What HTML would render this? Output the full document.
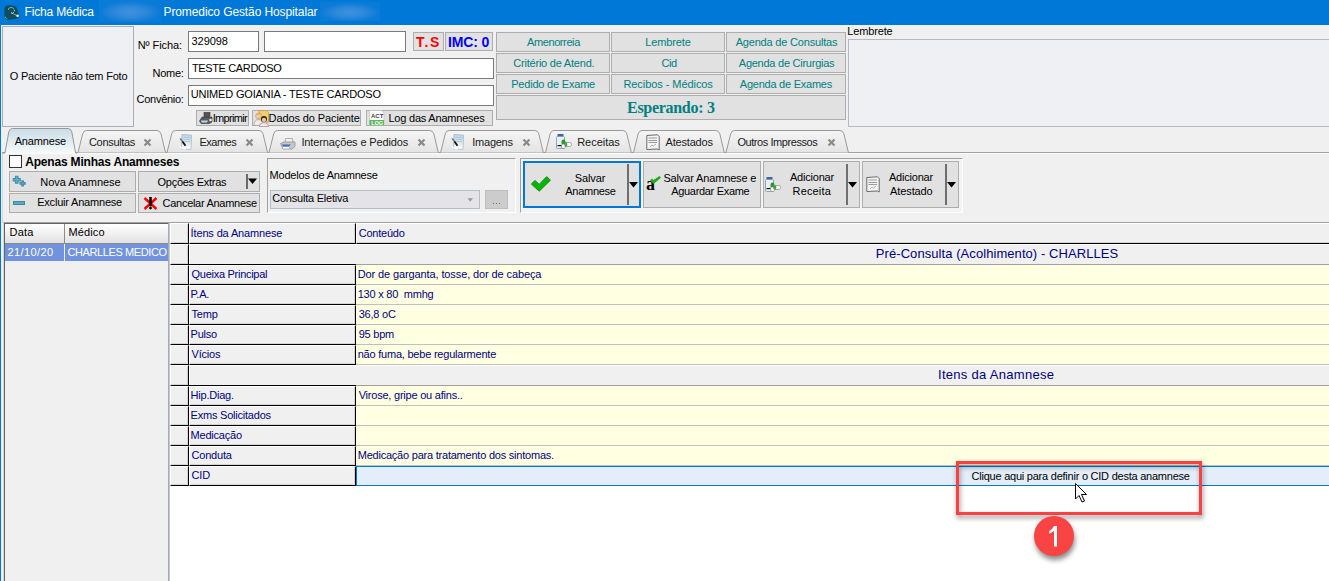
<!DOCTYPE html>
<html><head><meta charset="utf-8">
<style>
*{box-sizing:border-box;margin:0;padding:0}
html,body{width:1329px;height:581px;overflow:hidden;background:#f0f0f0;font-family:"Liberation Sans",sans-serif;font-size:11px;color:#000}
.a{position:absolute}
</style></head><body>
<div class="a" style="left:0px;top:0px;width:1329px;height:25px;background:#0078d7"></div>
<svg class="a" style="left:0;top:0" width="22" height="22"><path d="M5,7 Q6,5 9,5.2 L14,5.8 Q16.5,6.3 17.3,9 L19.2,15 Q19.6,18.6 16,19 L8,19.7 Q5,19.6 4.6,17 L4.4,10 Q4.4,8 5,7 Z" fill="#0d4f5e"/><path d="M8.5,9.5 Q9,7 12,7.6 Q14.8,8.5 14.3,11.5 Q13.5,13.3 11,12.8 L17,15.6" stroke="#e6f4f8" stroke-width="1" stroke-dasharray="1.1,0.9" fill="none"/><circle cx="17.6" cy="15.8" r="1.3" fill="#e6f4f8"/><path d="M5.2,17 L7,18.8" stroke="#cfe6ee" stroke-width="1" stroke-dasharray="1,0.8"/></svg>
<div class="a" style="left:24.6px;top:5px;font-size:12px;letter-spacing:-0.182px;color:#fff;;white-space:pre;line-height:normal">Ficha Médica</div>
<div class="a" style="left:99px;top:0px;width:62px;height:22px;background:radial-gradient(ellipse 50% 50% at 50% 55%,#3e92dd 0%,#3089da 45%,#0a7bd7 100%)"></div>
<div class="a" style="left:163.5px;top:5px;font-size:12px;letter-spacing:-0.104px;color:#fff;;white-space:pre;line-height:normal">Promedico Gestão Hospitalar</div>
<div class="a" style="left:320px;top:2px;width:60px;height:19px;background:radial-gradient(ellipse 50% 50% at 50% 55%,#3e92dd 0%,#3089da 45%,#0a7bd7 100%)"></div>
<div class="a" style="left:0px;top:25px;width:1px;height:556px;background:#0078d7"></div>
<div class="a" style="left:2px;top:26px;width:132px;height:101px;border:1px solid #a9aeb6;background:#eff0f3"></div>
<div class="a" style="left:9.7px;top:70px;font-size:11px;letter-spacing:-0.2px;color:#000;;white-space:pre;line-height:normal">O Paciente não tem Foto</div>
<div class="a" style="left:137.7px;top:39px;font-size:11px;letter-spacing:-0.062px;color:#000;;white-space:pre;line-height:normal">Nº Ficha:</div>
<div class="a" style="left:152.6px;top:67px;font-size:11px;letter-spacing:-0.3px;color:#000;;white-space:pre;line-height:normal">Nome:</div>
<div class="a" style="left:136.5px;top:93px;font-size:11px;letter-spacing:-0.263px;color:#000;;white-space:pre;line-height:normal">Convênio:</div>
<div class="a" style="left:188px;top:31px;width:71px;height:21px;background:#fff;border:1px solid #7a7a7a;"></div>
<div class="a" style="left:264px;top:31px;width:142px;height:21px;background:#fff;border:1px solid #7a7a7a;"></div>
<div class="a" style="left:188px;top:58px;width:306px;height:21px;background:#fff;border:1px solid #7a7a7a;"></div>
<div class="a" style="left:188px;top:85px;width:306px;height:21px;background:#fff;border:1px solid #7a7a7a;"></div>
<div class="a" style="left:191.6px;top:35px;font-size:11px;letter-spacing:-0.1px;color:#000;;white-space:pre;line-height:normal">329098</div>
<div class="a" style="left:191.9px;top:62px;font-size:11px;letter-spacing:-0.358px;color:#000;;white-space:pre;line-height:normal">TESTE CARDOSO</div>
<div class="a" style="left:190.7px;top:88px;font-size:11px;letter-spacing:-0.172px;color:#000;;white-space:pre;line-height:normal">UNIMED GOIANIA - TESTE CARDOSO</div>
<div class="a" style="left:413px;top:32px;width:31px;height:19px;background:#e1e1e1;border:1px solid #adadad;"></div>
<div class="a" style="left:445px;top:32px;width:48px;height:19px;background:#e1e1e1;border:1px solid #adadad;"></div>
<div class="a" style="left:416.0px;top:34px;font-size:14px;letter-spacing:1.6px;color:#f00;font-weight:bold;white-space:pre;line-height:normal">T.S</div>
<div class="a" style="left:447.9px;top:34px;font-size:14px;letter-spacing:-0.14px;color:#00f;font-weight:bold;white-space:pre;line-height:normal">IMC: 0</div>
<div class="a" style="left:196px;top:110px;width:53px;height:16px;background:#e1e1e1;border:1px solid #adadad;"></div>
<div class="a" style="left:252px;top:110px;width:109px;height:16px;background:#e1e1e1;border:1px solid #adadad;"></div>
<div class="a" style="left:366px;top:110px;width:127px;height:16px;background:#e1e1e1;border:1px solid #adadad;"></div>
<div class="a" style="left:212.7px;top:112px;font-size:11px;letter-spacing:-0.671px;color:#000;;white-space:pre;line-height:normal">Imprimir</div>
<div class="a" style="left:268.6px;top:112px;font-size:11px;letter-spacing:-0.106px;color:#000;;white-space:pre;line-height:normal">Dados do Paciente</div>
<div class="a" style="left:388.4px;top:112px;font-size:11px;letter-spacing:-0.206px;color:#000;;white-space:pre;line-height:normal">Log das Anamneses</div>
<svg class="a" style="left:199px;top:112px" width="14" height="12"><rect x="5" y="0.5" width="6" height="4" fill="#555" stroke="#333" stroke-width="0.6"/><path d="M0.5,9 L3,5 H13 L13,10 L10.5,11.5 H2 Z" fill="#5a5a5a" stroke="#333" stroke-width="0.6"/><path d="M2,8.5 H9 L8,10.5 H2.5 Z" fill="#aee0ee"/><circle cx="11.5" cy="8" r="1.3" fill="#eef"/></svg>
<svg class="a" style="left:253px;top:109px" width="17" height="18"><path d="M6,1.5 H13.5 L15.5,3.5 V13 H6 Z" fill="#f3cf6a" stroke="#c49a3a" stroke-width="0.8"/><circle cx="5.5" cy="7" r="2.9" fill="#f2c9a0" stroke="#b08a60" stroke-width="0.5"/><path d="M2.7,6 Q3.5,3.6 5.8,3.8 Q8,4 8.3,6 Q6,5 2.7,6 Z" fill="#d8b060"/><path d="M0.8,16.5 Q1.2,10.6 5.5,10.6 Q9.6,10.6 10,16.5 Z" fill="#ececec" stroke="#9a9a9a" stroke-width="0.7"/><circle cx="11" cy="10" r="3" fill="#33261e"/><circle cx="11" cy="10.9" r="2.1" fill="#f0c8a8"/><path d="M6.3,17.5 Q6.7,13.6 11,13.6 Q15.2,13.6 15.7,17.5 Z" fill="#f6e8e8" stroke="#a08888" stroke-width="0.7"/></svg>
<svg class="a" style="left:369px;top:110px" width="16" height="16"><path d="M0.5,0.5 H12.5 L15,3 V15.5 H0.5 Z" fill="#fff" stroke="#bbb" stroke-width="0.7"/><text x="2" y="8" font-family="Liberation Sans" font-weight="bold" font-size="6" fill="#444">ACT</text><rect x="0.5" y="10" width="14.5" height="5.5" fill="#5cb85c"/><text x="2.2" y="15" font-family="Liberation Sans" font-weight="bold" font-size="5.5" fill="#fff">LOG</text></svg>
<div class="a" style="left:496px;top:32px;width:114px;height:20px;background:#e1e1e1;border:1px solid #adadad;"></div>
<div class="a" style="left:496px;top:53px;width:114px;height:20px;background:#e1e1e1;border:1px solid #adadad;"></div>
<div class="a" style="left:496px;top:74px;width:114px;height:20px;background:#e1e1e1;border:1px solid #adadad;"></div>
<div class="a" style="left:611px;top:32px;width:114px;height:20px;background:#e1e1e1;border:1px solid #adadad;"></div>
<div class="a" style="left:611px;top:53px;width:114px;height:20px;background:#e1e1e1;border:1px solid #adadad;"></div>
<div class="a" style="left:611px;top:74px;width:114px;height:20px;background:#e1e1e1;border:1px solid #adadad;"></div>
<div class="a" style="left:726px;top:32px;width:120px;height:20px;background:#e1e1e1;border:1px solid #adadad;"></div>
<div class="a" style="left:726px;top:53px;width:120px;height:20px;background:#e1e1e1;border:1px solid #adadad;"></div>
<div class="a" style="left:726px;top:74px;width:120px;height:20px;background:#e1e1e1;border:1px solid #adadad;"></div>
<div class="a" style="left:496px;top:95px;width:350px;height:25px;background:#e1e1e1;border:1px solid #adadad;"></div>
<div class="a" style="left:527.0px;top:36px;font-size:11px;letter-spacing:-0.4px;color:#008080;;white-space:pre;line-height:normal">Amenorreia</div>
<div class="a" style="left:513.3px;top:57px;font-size:11px;letter-spacing:-0.218px;color:#008080;;white-space:pre;line-height:normal">Critério de Atend.</div>
<div class="a" style="left:511.2px;top:78px;font-size:11px;letter-spacing:-0.2px;color:#008080;;white-space:pre;line-height:normal">Pedido de Exame</div>
<div class="a" style="left:645.3px;top:36px;font-size:11px;letter-spacing:-0.129px;color:#008080;;white-space:pre;line-height:normal">Lembrete</div>
<div class="a" style="left:661.4px;top:57px;font-size:11px;letter-spacing:-0.4px;color:#008080;;white-space:pre;line-height:normal">Cid</div>
<div class="a" style="left:623.4px;top:78px;font-size:11px;letter-spacing:-0.062px;color:#008080;;white-space:pre;line-height:normal">Recibos - Médicos</div>
<div class="a" style="left:735.7px;top:36px;font-size:11px;letter-spacing:-0.189px;color:#008080;;white-space:pre;line-height:normal">Agenda de Consultas</div>
<div class="a" style="left:738.8px;top:57px;font-size:11px;letter-spacing:-0.25px;color:#008080;;white-space:pre;line-height:normal">Agenda de Cirurgias</div>
<div class="a" style="left:739.8px;top:78px;font-size:11px;letter-spacing:-0.24px;color:#008080;;white-space:pre;line-height:normal">Agenda de Exames</div>
<div class="a" style="left:627.0px;top:99px;font-size:16px;letter-spacing:-0.291px;color:#008080;font-family:'Liberation Serif';font-weight:bold;white-space:pre;line-height:normal">Esperando: 3</div>
<div class="a" style="left:847.2px;top:25px;font-size:11px;letter-spacing:-0.143px;color:#000;;white-space:pre;line-height:normal">Lembrete</div>
<div class="a" style="left:848px;top:39px;width:490px;height:88px;border:1px solid #b4b9c2;background:#eff0f3"></div>
<div class="a" style="left:2px;top:152px;width:1327px;height:1px;background:#a0a0a0"></div>
<div class="a" style="left:3px;top:153px;width:1326px;height:1px;background:#fdfdfd"></div>
<div class="a" style="left:2px;top:153px;width:1px;height:70px;background:#d8d8d8"></div>
<svg class="a" style="left:0;top:126px" width="1329" height="28"><defs><linearGradient id="tg" x1="0" y1="0" x2="0" y2="1"><stop offset="0" stop-color="#f5f5f5"/><stop offset="1" stop-color="#e4e4e4"/></linearGradient><linearGradient id="ta" x1="0" y1="0" x2="0" y2="1"><stop offset="0" stop-color="#c9dde6"/><stop offset="1" stop-color="#f6f9fa"/></linearGradient></defs><path d="M78.0,26.5 L82.7,7.8 Q83.6,4.5 86.5,4.5 L157.0,4.5 Q159.9,4.5 161.0,7.8 L165.5,26.5" fill="url(#tg)" stroke="#999" stroke-width="1"/><path d="M167.0,26.5 L171.7,7.8 Q172.6,4.5 175.5,4.5 L259.0,4.5 Q261.9,4.5 263.0,7.8 L267.5,26.5" fill="url(#tg)" stroke="#999" stroke-width="1"/><path d="M269.0,26.5 L273.7,7.8 Q274.6,4.5 277.5,4.5 L429.8,4.5 Q432.7,4.5 433.8,7.8 L438.3,26.5" fill="url(#tg)" stroke="#999" stroke-width="1"/><path d="M440.6,26.5 L445.3,7.8 Q446.2,4.5 449.1,4.5 L534.8,4.5 Q537.7,4.5 538.8,7.8 L543.3,26.5" fill="url(#tg)" stroke="#999" stroke-width="1"/><path d="M545.5,26.5 L550.2,7.8 Q551.1,4.5 554.0,4.5 L622.8,4.5 Q625.7,4.5 626.8,7.8 L631.3,26.5" fill="url(#tg)" stroke="#999" stroke-width="1"/><path d="M633.5,26.5 L638.2,7.8 Q639.1,4.5 642.0,4.5 L715.8,4.5 Q718.7,4.5 719.8,7.8 L724.3,26.5" fill="url(#tg)" stroke="#999" stroke-width="1"/><path d="M726.0,26.5 L730.7,7.8 Q731.6,4.5 734.5,4.5 L839.9,4.5 Q842.8,4.5 843.9,7.8 L848.4,26.5" fill="url(#tg)" stroke="#999" stroke-width="1"/><path d="M2,27.0 L5,27.0 L8.8,5.8 Q9.8,2.5 12.5,2.5 L68.1,2.5 Q70.8,2.5 71.8,5.8 L75.6,27.0 L77.1,27.0 Z" fill="url(#ta)" stroke="none"/><path d="M2,27.0 L5,27.0 L8.8,5.8 Q9.8,2.5 12.5,2.5 L68.1,2.5 Q70.8,2.5 71.8,5.8 L75.6,27.0 L77.1,27.0" fill="none" stroke="#999" stroke-width="1"/></svg>
<div class="a" style="left:14.7px;top:135px;font-size:11px;letter-spacing:-0.171px;color:#000;;white-space:pre;line-height:normal">Anamnese</div>
<div class="a" style="left:89.0px;top:136px;font-size:11px;letter-spacing:-0.325px;color:#1a1a1a;;white-space:pre;line-height:normal">Consultas</div>
<div class="a" style="left:199.5px;top:136px;font-size:11px;letter-spacing:-0.5px;color:#1a1a1a;;white-space:pre;line-height:normal">Exames</div>
<div class="a" style="left:301.4px;top:136px;font-size:11px;letter-spacing:-0.125px;color:#1a1a1a;;white-space:pre;line-height:normal">Internações e Pedidos</div>
<div class="a" style="left:472.3px;top:136px;font-size:11px;letter-spacing:-0.25px;color:#1a1a1a;;white-space:pre;line-height:normal">Imagens</div>
<div class="a" style="left:577.2px;top:136px;font-size:11px;letter-spacing:-0.029px;color:#1a1a1a;;white-space:pre;line-height:normal">Receitas</div>
<div class="a" style="left:665.6px;top:136px;font-size:11px;letter-spacing:-0.2px;color:#1a1a1a;;white-space:pre;line-height:normal">Atestados</div>
<div class="a" style="left:737.4px;top:136px;font-size:11px;letter-spacing:-0.427px;color:#1a1a1a;;white-space:pre;line-height:normal">Outros Impressos</div>
<svg class="a" style="left:143px;top:138px" width="9" height="9"><path d="M1.5,1.5 L7.5,7.5 M7.5,1.5 L1.5,7.5" stroke="#8a8a8a" stroke-width="2.2"/></svg>
<svg class="a" style="left:245px;top:138px" width="9" height="9"><path d="M1.5,1.5 L7.5,7.5 M7.5,1.5 L1.5,7.5" stroke="#8a8a8a" stroke-width="2.2"/></svg>
<svg class="a" style="left:417px;top:138px" width="9" height="9"><path d="M1.5,1.5 L7.5,7.5 M7.5,1.5 L1.5,7.5" stroke="#8a8a8a" stroke-width="2.2"/></svg>
<svg class="a" style="left:522px;top:138px" width="9" height="9"><path d="M1.5,1.5 L7.5,7.5 M7.5,1.5 L1.5,7.5" stroke="#8a8a8a" stroke-width="2.2"/></svg>
<svg class="a" style="left:827px;top:138px" width="9" height="9"><path d="M1.5,1.5 L7.5,7.5 M7.5,1.5 L1.5,7.5" stroke="#8a8a8a" stroke-width="2.2"/></svg>
<svg class="a" style="left:179px;top:134px" width="14" height="16"><defs><linearGradient id="dpg" x1="0" y1="0" x2="0" y2="1"><stop offset="0" stop-color="#b4d8f4"/><stop offset="0.55" stop-color="#dde8ee"/><stop offset="1" stop-color="#ffffff"/></linearGradient></defs><path d="M3,0.5 L12.5,1.2 L12,15.5 L2.5,14.5 Z" fill="url(#dpg)" stroke="#a0a8ae" stroke-width="0.6"/><path d="M4.5,3.5 H11 M4.5,5.5 H11 M4.5,7.5 H11" stroke="#9fb4c2" stroke-width="0.6"/><path d="M1.2,4.5 L3.5,7.5" stroke="#777" stroke-width="1.6"/><path d="M3.5,7.5 L6.5,11.8" stroke="#111" stroke-width="1.8"/><path d="M0.8,12.5 L3,14 L7,15" stroke="#fff" stroke-width="1.2" fill="none"/></svg>
<svg class="a" style="left:451px;top:134px" width="14" height="16"><defs><linearGradient id="dpg" x1="0" y1="0" x2="0" y2="1"><stop offset="0" stop-color="#b4d8f4"/><stop offset="0.55" stop-color="#dde8ee"/><stop offset="1" stop-color="#ffffff"/></linearGradient></defs><path d="M3,0.5 L12.5,1.2 L12,15.5 L2.5,14.5 Z" fill="url(#dpg)" stroke="#a0a8ae" stroke-width="0.6"/><path d="M4.5,3.5 H11 M4.5,5.5 H11 M4.5,7.5 H11" stroke="#9fb4c2" stroke-width="0.6"/><path d="M1.2,4.5 L3.5,7.5" stroke="#777" stroke-width="1.6"/><path d="M3.5,7.5 L6.5,11.8" stroke="#111" stroke-width="1.8"/><path d="M0.8,12.5 L3,14 L7,15" stroke="#fff" stroke-width="1.2" fill="none"/></svg>
<svg class="a" style="left:556px;top:133px" width="17" height="17"><rect x="1.5" y="1" width="6" height="2.5" fill="#3c64b4"/><rect x="0.5" y="3.5" width="8" height="12" rx="1" fill="#e8f0fa" stroke="#8090a0" stroke-width="0.8"/><rect x="1.5" y="12" width="5" height="1.2" fill="#111"/><rect x="5.5" y="6.5" width="4" height="5.5" rx="2" fill="#2a9a2a"/><rect x="5.5" y="11" width="4" height="4.5" rx="1.5" fill="#fff" stroke="#777" stroke-width="0.6"/><rect x="9" y="9.5" width="6.5" height="4" rx="1.8" fill="#fff" stroke="#777" stroke-width="0.6"/><rect x="8.6" y="9.5" width="2.6" height="4" fill="#3aaa3a"/></svg>
<svg class="a" style="left:646px;top:134px" width="14" height="17"><path d="M0.8,1.5 L11.5,0.8 L13.2,2.5 L13.2,16 L11.5,15 L0.8,15.5 Z" fill="#f4f4f4" stroke="#6a6a6a" stroke-width="1"/><path d="M2.5,4 H11 M2.5,6.5 H11 M2.5,8.5 H11" stroke="#9a9a9a" stroke-width="1"/><path d="M4,13 L6,11 L7.5,12 L10,10" stroke="#999" stroke-width="0.8" fill="none"/></svg>
<svg class="a" style="left:280px;top:138px" width="16" height="12"><path d="M5.5,0.5 H12.5 L13,6 H5 Z" fill="#f0f0f0" stroke="#999" stroke-width="0.7"/><path d="M0.5,5.5 L4,4 H15 L15,8.5 L12,11 H3 Z" fill="#c8c8c8" stroke="#888" stroke-width="0.7"/><path d="M2,6.5 H11 L9,8.5 H3 Z" fill="#3c6cc0"/><rect x="3" y="9" width="6" height="1.5" fill="#fff"/></svg>
<div class="a" style="left:9px;top:155px;width:13px;height:13px;border:1px solid #333;background:#fff"></div>
<div class="a" style="left:25.2px;top:155px;font-size:12px;letter-spacing:-0.186px;color:#000;font-weight:bold;white-space:pre;line-height:normal">Apenas Minhas Anamneses</div>
<div class="a" style="left:9px;top:171px;width:127px;height:21px;background:#e1e1e1;border:1px solid #adadad;"></div>
<div class="a" style="left:9px;top:193px;width:127px;height:20px;background:#e1e1e1;border:1px solid #adadad;"></div>
<div class="a" style="left:138px;top:171px;width:122px;height:21px;background:#e1e1e1;border:1px solid #adadad;"></div>
<div class="a" style="left:138px;top:193px;width:122px;height:20px;background:#e1e1e1;border:1px solid #adadad;"></div>
<div class="a" style="left:40.3px;top:176px;font-size:11px;letter-spacing:-0.025px;color:#000;;white-space:pre;line-height:normal">Nova Anamnese</div>
<div class="a" style="left:37.2px;top:196px;font-size:11px;letter-spacing:-0.2px;color:#000;;white-space:pre;line-height:normal">Excluir Anamnese</div>
<div class="a" style="left:157.5px;top:176px;font-size:11px;letter-spacing:-0.258px;color:#000;;white-space:pre;line-height:normal">Opções Extras</div>
<div class="a" style="left:162.6px;top:197px;font-size:11px;letter-spacing:-0.287px;color:#000;;white-space:pre;line-height:normal">Cancelar Anamnese</div>
<svg class="a" style="left:12px;top:175px" width="15" height="12"><path d="M3.5,1.2 h2.5 v2.3 h2.3 v2.5 h-2.3 v2.3 h-2.5 v-2.3 h-2.3 v-2.5 h2.3 z" fill="#62aec4" stroke="#3f8ea6" stroke-width="1.1" stroke-linejoin="round"/><path d="M9.8,5.8 h1.6 v1.8 h1.8 v1.6 h-1.8 v1.8 h-1.6 v-1.8 h-1.8 v-1.6 h1.8 z" fill="#62aec4" stroke="#3f8ea6" stroke-width="1.1" stroke-linejoin="round"/></svg>
<div class="a" style="left:13px;top:201px;width:12px;height:4px;background:#5aaac2;border:1px solid #3f8aa3"></div>
<svg class="a" style="left:143px;top:197px" width="15" height="13"><path d="M1.5,1 L13.5,12 M13.5,1 L1.5,12" stroke="#f00" stroke-width="2.4"/><path d="M7.5,0.5 L7.5,8" stroke="#000" stroke-width="2.6" stroke-linecap="round"/><circle cx="7.5" cy="11" r="1.4" fill="#000"/></svg>
<div class="a" style="left:246px;top:174px;width:2px;height:15px;background:#6a6a6a"></div>
<svg class="a" style="left:248px;top:178px" width="10" height="7"><path d="M0,0.5 H9 L4.5,6 Z" fill="#000"/></svg>
<div class="a" style="left:267px;top:158px;width:249px;height:55px;border:1px solid #a0a0a0;border-right-color:#fff;border-bottom-color:#fff"></div>
<div class="a" style="left:269.5px;top:169px;font-size:11px;letter-spacing:-0.194px;color:#000;;white-space:pre;line-height:normal">Modelos de Anamnese</div>
<div class="a" style="left:270px;top:190px;width:210px;height:19px;background:#e4e4e8;border:1px solid #b4bcc4"></div>
<div class="a" style="left:272.2px;top:192px;font-size:11px;letter-spacing:-0.213px;color:#000;;white-space:pre;line-height:normal">Consulta Eletiva</div>
<svg class="a" style="left:467px;top:198px" width="7" height="5"><path d="M0.5,0.2 H6 L3.25,3.8 Z" fill="#9a9a9a"/></svg>
<div class="a" style="left:485px;top:190px;width:23px;height:19px;background:#cccccc;border:1px solid #bdbdbd"></div>
<div class="a" style="left:493px;top:203px;width:1px;height:1px;background:#707070"></div>
<div class="a" style="left:496px;top:203px;width:1px;height:1px;background:#707070"></div>
<div class="a" style="left:499px;top:203px;width:1px;height:1px;background:#707070"></div>
<div class="a" style="left:520px;top:158px;width:443px;height:55px;border:1px solid #a0a0a0;border-right-color:#fff;border-bottom-color:#fff;background:#f3f3f3"></div>
<div class="a" style="left:523px;top:161px;width:118px;height:47px;background:#e1e1e1;border:2px solid #0078d7"></div>
<div class="a" style="left:643px;top:161px;width:118px;height:47px;background:#e1e1e1;border:1px solid #adadad;"></div>
<div class="a" style="left:763px;top:161px;width:97px;height:47px;background:#e1e1e1;border:1px solid #adadad;"></div>
<div class="a" style="left:862px;top:161px;width:97px;height:47px;background:#e1e1e1;border:1px solid #adadad;"></div>
<div class="a" style="left:574.7px;top:172px;font-size:11px;letter-spacing:-0.1px;color:#000;;white-space:pre;line-height:normal">Salvar</div>
<div class="a" style="left:565.2px;top:185px;font-size:11px;letter-spacing:-0.257px;color:#000;;white-space:pre;line-height:normal">Anamnese</div>
<div class="a" style="left:663.4px;top:172px;font-size:11px;letter-spacing:-0.144px;color:#000;;white-space:pre;line-height:normal">Salvar Anamnese e</div>
<div class="a" style="left:671.2px;top:185px;font-size:11px;letter-spacing:-0.308px;color:#000;;white-space:pre;line-height:normal">Aguardar Exame</div>
<div class="a" style="left:790.0px;top:171px;font-size:11px;letter-spacing:-0.213px;color:#000;;white-space:pre;line-height:normal">Adicionar</div>
<div class="a" style="left:792.6px;top:185px;font-size:11px;letter-spacing:0.15px;color:#000;;white-space:pre;line-height:normal">Receita</div>
<div class="a" style="left:889.0px;top:171px;font-size:11px;letter-spacing:-0.213px;color:#000;;white-space:pre;line-height:normal">Adicionar</div>
<div class="a" style="left:890.1px;top:185px;font-size:11px;letter-spacing:-0.114px;color:#000;;white-space:pre;line-height:normal">Atestado</div>
<div class="a" style="left:627px;top:164px;width:2px;height:41px;background:#6f6f6f"></div>
<svg class="a" style="left:629px;top:182px" width="10" height="6"><path d="M0,0 H9 L4.5,5.5 Z" fill="#000"/></svg>
<div class="a" style="left:846px;top:164px;width:2px;height:41px;background:#6f6f6f"></div>
<svg class="a" style="left:848px;top:182px" width="10" height="6"><path d="M0,0 H9 L4.5,5.5 Z" fill="#000"/></svg>
<div class="a" style="left:945px;top:164px;width:2px;height:41px;background:#6f6f6f"></div>
<svg class="a" style="left:947px;top:182px" width="10" height="6"><path d="M0,0 H9 L4.5,5.5 Z" fill="#000"/></svg>
<svg class="a" style="left:529px;top:174px" width="24" height="20"><path d="M2.3,10 L6,6.5 L10.2,10.4 L17.7,2.6 L21.4,6.2 L10.2,17.2 Z" fill="#00b800" stroke="#138a13" stroke-width="1" stroke-linejoin="round"/></svg>
<div class="a" style="left:646px;top:176px;font-family:'Liberation Serif',serif;font-size:18px;font-weight:bold;line-height:16px">a</div>
<svg class="a" style="left:649px;top:176px" width="13" height="9"><path d="M1,4.5 L3,2.5 L4.5,4 L10.5,0 L12,1.8 L4.5,8 Z" fill="#1faa1f"/></svg>
<svg class="a" style="left:765px;top:176px" width="17" height="17"><rect x="1.5" y="1" width="6" height="2.5" fill="#3c64b4"/><rect x="0.5" y="3.5" width="8" height="12" rx="1" fill="#e8f0fa" stroke="#8090a0" stroke-width="0.8"/><rect x="1.5" y="12" width="5" height="1.2" fill="#111"/><rect x="5.5" y="6.5" width="4" height="5.5" rx="2" fill="#2a9a2a"/><rect x="5.5" y="11" width="4" height="4.5" rx="1.5" fill="#fff" stroke="#777" stroke-width="0.6"/><rect x="9" y="9.5" width="6.5" height="4" rx="1.8" fill="#fff" stroke="#777" stroke-width="0.6"/><rect x="8.6" y="9.5" width="2.6" height="4" fill="#3aaa3a"/></svg>
<svg class="a" style="left:866px;top:176px" width="14" height="17"><path d="M0.8,1.5 L11.5,0.8 L13.2,2.5 L13.2,16 L11.5,15 L0.8,15.5 Z" fill="#f4f4f4" stroke="#6a6a6a" stroke-width="1"/><path d="M2.5,4 H11 M2.5,6.5 H11 M2.5,8.5 H11" stroke="#9a9a9a" stroke-width="1"/><path d="M4,13 L6,11 L7.5,12 L10,10" stroke="#999" stroke-width="0.8" fill="none"/></svg>
<div class="a" style="left:3px;top:222px;width:1326px;height:359px;border-top:1px solid #a0a0a0;border-left:1px solid #d8d8d8"></div>
<div class="a" style="left:4px;top:223px;width:165px;height:358px;border-top:1px solid #646464;border-left:1px solid #646464;background:#f0f0f0"></div>
<div class="a" style="left:5px;top:224px;width:164px;height:20px;background:linear-gradient(#ffffff,#e2e2e2);border-bottom:1px solid #8a8a8a"></div>
<div class="a" style="left:64px;top:224px;width:1px;height:19px;background:#8a8a8a"></div>
<div class="a" style="left:9.5px;top:226px;font-size:11px;letter-spacing:0.2px;color:#000;;white-space:pre;line-height:normal">Data</div>
<div class="a" style="left:68.5px;top:226px;font-size:11px;letter-spacing:0.12px;color:#000;;white-space:pre;line-height:normal">Médico</div>
<div class="a" style="left:5px;top:244px;width:163px;height:17px;background:#7193de"></div>
<div class="a" style="left:64px;top:244px;width:1px;height:17px;background:#f0f0f0"></div>
<div class="a" style="left:7.5px;top:246px;font-size:11px;letter-spacing:0.414px;color:#fff;;white-space:pre;line-height:normal">21/10/20</div>
<div class="a" style="left:65px;top:244px;width:103px;height:17px;overflow:hidden"><div class="a" style="left:2.4px;top:2px;font-size:11px;letter-spacing:-0.386px;color:#fff;;white-space:pre;line-height:normal">CHARLLES MEDICO</div></div>
<div class="a" style="left:168px;top:223px;width:1px;height:358px;background:#a6aab2"></div>
<div class="a" style="left:169px;top:223px;width:1px;height:358px;background:#c4c8ce"></div>
<div class="a" style="left:170px;top:223px;width:1159px;height:358px;background:#fff"></div>
<div class="a" style="left:170px;top:223px;width:19px;height:21px;background:#f0f0f0;border-top:1px solid #fff;border-left:1px solid #fff;border-bottom:1px solid #000;border-right:1px solid #000;box-shadow:inset -1px 0 0 #d4d4d4,inset 0 -1px 0 #d4d4d4;"></div>
<div class="a" style="left:189px;top:223px;width:167px;height:21px;background:#f0f0f0;border-top:1px solid #fff;border-left:1px solid #fff;border-bottom:1px solid #000;border-right:1px solid #000;box-shadow:inset -1px 0 0 #d4d4d4,inset 0 -1px 0 #d4d4d4;"></div>
<div class="a" style="left:356px;top:223px;width:973px;height:21px;background:#f0f0f0;border-top:1px solid #fff;border-left:1px solid #fff;border-bottom:1px solid #000;box-shadow:inset 0 -1px 0 #d4d4d4;"></div>
<div class="a" style="left:190.6px;top:227px;font-size:11px;letter-spacing:-0.144px;color:#000080;;white-space:pre;line-height:normal">Ítens da Anamnese</div>
<div class="a" style="left:358.7px;top:227px;font-size:11px;letter-spacing:-0.214px;color:#000080;;white-space:pre;line-height:normal">Conteúdo</div>
<div class="a" style="left:170px;top:244px;width:19px;height:21px;background:#f0f0f0;border-top:1px solid #fff;border-left:1px solid #fff;border-bottom:1px solid #000;border-right:1px solid #000;box-shadow:inset -1px 0 0 #d4d4d4,inset 0 -1px 0 #d4d4d4;"></div>
<div class="a" style="left:189px;top:244px;width:1140px;height:21px;background:#f0f0f0;border-top:1px solid #fff;border-left:1px solid #fff;border-bottom:1px solid #a0a0a0"></div>
<div class="a" style="left:189px;top:264px;width:167px;height:1px;background:#000"></div>
<div class="a" style="left:875.8px;top:246px;font-size:13px;letter-spacing:0.069px;color:#000080;;white-space:pre;line-height:normal">Pré-Consulta (Acolhimento) - CHARLLES</div>
<div class="a" style="left:170px;top:265px;width:19px;height:20px;background:#f0f0f0;border-top:1px solid #fff;border-left:1px solid #fff;border-bottom:1px solid #000;border-right:1px solid #000;box-shadow:inset -1px 0 0 #d4d4d4,inset 0 -1px 0 #d4d4d4;"></div>
<div class="a" style="left:189px;top:265px;width:167px;height:20px;background:#f0f0f0;border-top:1px solid #fff;border-left:1px solid #fff;border-bottom:1px solid #000;border-right:1px solid #000;box-shadow:inset -1px 0 0 #d4d4d4,inset 0 -1px 0 #d4d4d4;"></div>
<div class="a" style="left:356px;top:265px;width:973px;height:20px;background:#ffffe1;border-bottom:1px solid #c0c0c0"></div>
<div class="a" style="left:357.7px;top:268px;font-size:11px;letter-spacing:-0.111px;color:#000080;;white-space:pre;line-height:normal">Dor de garganta, tosse, dor de cabeça</div>
<div class="a" style="left:191.6px;top:268px;font-size:11px;letter-spacing:-0.28px;color:#000080;;white-space:pre;line-height:normal">Queixa Principal</div>
<div class="a" style="left:170px;top:285px;width:19px;height:20px;background:#f0f0f0;border-top:1px solid #fff;border-left:1px solid #fff;border-bottom:1px solid #000;border-right:1px solid #000;box-shadow:inset -1px 0 0 #d4d4d4,inset 0 -1px 0 #d4d4d4;"></div>
<div class="a" style="left:189px;top:285px;width:167px;height:20px;background:#f0f0f0;border-top:1px solid #fff;border-left:1px solid #fff;border-bottom:1px solid #000;border-right:1px solid #000;box-shadow:inset -1px 0 0 #d4d4d4,inset 0 -1px 0 #d4d4d4;"></div>
<div class="a" style="left:356px;top:285px;width:973px;height:20px;background:#ffffe1;border-bottom:1px solid #c0c0c0"></div>
<div class="a" style="left:357.7px;top:288px;font-size:11px;letter-spacing:-0.22px;color:#000080;;white-space:pre;line-height:normal">130 x 80  mmhg</div>
<div class="a" style="left:190.6px;top:288px;font-size:11px;letter-spacing:-0.22px;color:#000080;;white-space:pre;line-height:normal">P.A.</div>
<div class="a" style="left:170px;top:305px;width:19px;height:20px;background:#f0f0f0;border-top:1px solid #fff;border-left:1px solid #fff;border-bottom:1px solid #000;border-right:1px solid #000;box-shadow:inset -1px 0 0 #d4d4d4,inset 0 -1px 0 #d4d4d4;"></div>
<div class="a" style="left:189px;top:305px;width:167px;height:20px;background:#f0f0f0;border-top:1px solid #fff;border-left:1px solid #fff;border-bottom:1px solid #000;border-right:1px solid #000;box-shadow:inset -1px 0 0 #d4d4d4,inset 0 -1px 0 #d4d4d4;"></div>
<div class="a" style="left:356px;top:305px;width:973px;height:20px;background:#ffffe1;border-bottom:1px solid #c0c0c0"></div>
<div class="a" style="left:358.7px;top:308px;font-size:11px;letter-spacing:-0.22px;color:#000080;;white-space:pre;line-height:normal">36,8 oC</div>
<div class="a" style="left:191.6px;top:308px;font-size:11px;letter-spacing:-0.22px;color:#000080;;white-space:pre;line-height:normal">Temp</div>
<div class="a" style="left:170px;top:325px;width:19px;height:20px;background:#f0f0f0;border-top:1px solid #fff;border-left:1px solid #fff;border-bottom:1px solid #000;border-right:1px solid #000;box-shadow:inset -1px 0 0 #d4d4d4,inset 0 -1px 0 #d4d4d4;"></div>
<div class="a" style="left:189px;top:325px;width:167px;height:20px;background:#f0f0f0;border-top:1px solid #fff;border-left:1px solid #fff;border-bottom:1px solid #000;border-right:1px solid #000;box-shadow:inset -1px 0 0 #d4d4d4,inset 0 -1px 0 #d4d4d4;"></div>
<div class="a" style="left:356px;top:325px;width:973px;height:20px;background:#ffffe1;border-bottom:1px solid #c0c0c0"></div>
<div class="a" style="left:358.7px;top:328px;font-size:11px;letter-spacing:-0.22px;color:#000080;;white-space:pre;line-height:normal">95 bpm</div>
<div class="a" style="left:190.6px;top:328px;font-size:11px;letter-spacing:-0.22px;color:#000080;;white-space:pre;line-height:normal">Pulso</div>
<div class="a" style="left:170px;top:345px;width:19px;height:20px;background:#f0f0f0;border-top:1px solid #fff;border-left:1px solid #fff;border-bottom:1px solid #000;border-right:1px solid #000;box-shadow:inset -1px 0 0 #d4d4d4,inset 0 -1px 0 #d4d4d4;"></div>
<div class="a" style="left:189px;top:345px;width:167px;height:20px;background:#f0f0f0;border-top:1px solid #fff;border-left:1px solid #fff;border-bottom:1px solid #000;border-right:1px solid #000;box-shadow:inset -1px 0 0 #d4d4d4,inset 0 -1px 0 #d4d4d4;"></div>
<div class="a" style="left:356px;top:345px;width:973px;height:20px;background:#ffffe1;border-bottom:1px solid #c0c0c0"></div>
<div class="a" style="left:357.7px;top:348px;font-size:11px;letter-spacing:-0.22px;color:#000080;;white-space:pre;line-height:normal">não fuma, bebe regularmente</div>
<div class="a" style="left:191.6px;top:348px;font-size:11px;letter-spacing:-0.22px;color:#000080;;white-space:pre;line-height:normal">Vícios</div>
<div class="a" style="left:170px;top:365px;width:19px;height:21px;background:#f0f0f0;border-top:1px solid #fff;border-left:1px solid #fff;border-bottom:1px solid #000;border-right:1px solid #000;box-shadow:inset -1px 0 0 #d4d4d4,inset 0 -1px 0 #d4d4d4;"></div>
<div class="a" style="left:189px;top:365px;width:1140px;height:21px;background:#f0f0f0;border-top:1px solid #fff;border-left:1px solid #fff;border-bottom:1px solid #a0a0a0"></div>
<div class="a" style="left:189px;top:385px;width:167px;height:1px;background:#000"></div>
<div class="a" style="left:938.0px;top:367px;font-size:13px;letter-spacing:0.294px;color:#000080;;white-space:pre;line-height:normal">Itens da Anamnese</div>
<div class="a" style="left:170px;top:386px;width:19px;height:20px;background:#f0f0f0;border-top:1px solid #fff;border-left:1px solid #fff;border-bottom:1px solid #000;border-right:1px solid #000;box-shadow:inset -1px 0 0 #d4d4d4,inset 0 -1px 0 #d4d4d4;"></div>
<div class="a" style="left:189px;top:386px;width:167px;height:20px;background:#f0f0f0;border-top:1px solid #fff;border-left:1px solid #fff;border-bottom:1px solid #000;border-right:1px solid #000;box-shadow:inset -1px 0 0 #d4d4d4,inset 0 -1px 0 #d4d4d4;"></div>
<div class="a" style="left:356px;top:386px;width:973px;height:20px;background:#ffffe1;border-bottom:1px solid #c0c0c0"></div>
<div class="a" style="left:358.7px;top:389px;font-size:11px;letter-spacing:-0.22px;color:#000080;;white-space:pre;line-height:normal">Virose, gripe ou afins..</div>
<div class="a" style="left:190.6px;top:389px;font-size:11px;letter-spacing:-0.22px;color:#000080;;white-space:pre;line-height:normal">Hip.Diag.</div>
<div class="a" style="left:170px;top:406px;width:19px;height:20px;background:#f0f0f0;border-top:1px solid #fff;border-left:1px solid #fff;border-bottom:1px solid #000;border-right:1px solid #000;box-shadow:inset -1px 0 0 #d4d4d4,inset 0 -1px 0 #d4d4d4;"></div>
<div class="a" style="left:189px;top:406px;width:167px;height:20px;background:#f0f0f0;border-top:1px solid #fff;border-left:1px solid #fff;border-bottom:1px solid #000;border-right:1px solid #000;box-shadow:inset -1px 0 0 #d4d4d4,inset 0 -1px 0 #d4d4d4;"></div>
<div class="a" style="left:356px;top:406px;width:973px;height:20px;background:#ffffe1;border-bottom:1px solid #c0c0c0"></div>
<div class="a" style="left:190.6px;top:409px;font-size:11px;letter-spacing:-0.22px;color:#000080;;white-space:pre;line-height:normal">Exms Solicitados</div>
<div class="a" style="left:170px;top:426px;width:19px;height:20px;background:#f0f0f0;border-top:1px solid #fff;border-left:1px solid #fff;border-bottom:1px solid #000;border-right:1px solid #000;box-shadow:inset -1px 0 0 #d4d4d4,inset 0 -1px 0 #d4d4d4;"></div>
<div class="a" style="left:189px;top:426px;width:167px;height:20px;background:#f0f0f0;border-top:1px solid #fff;border-left:1px solid #fff;border-bottom:1px solid #000;border-right:1px solid #000;box-shadow:inset -1px 0 0 #d4d4d4,inset 0 -1px 0 #d4d4d4;"></div>
<div class="a" style="left:356px;top:426px;width:973px;height:20px;background:#ffffe1;border-bottom:1px solid #c0c0c0"></div>
<div class="a" style="left:190.6px;top:429px;font-size:11px;letter-spacing:-0.22px;color:#000080;;white-space:pre;line-height:normal">Medicação</div>
<div class="a" style="left:170px;top:446px;width:19px;height:20px;background:#f0f0f0;border-top:1px solid #fff;border-left:1px solid #fff;border-bottom:1px solid #000;border-right:1px solid #000;box-shadow:inset -1px 0 0 #d4d4d4,inset 0 -1px 0 #d4d4d4;"></div>
<div class="a" style="left:189px;top:446px;width:167px;height:20px;background:#f0f0f0;border-top:1px solid #fff;border-left:1px solid #fff;border-bottom:1px solid #000;border-right:1px solid #000;box-shadow:inset -1px 0 0 #d4d4d4,inset 0 -1px 0 #d4d4d4;"></div>
<div class="a" style="left:356px;top:446px;width:973px;height:20px;background:#ffffe1;border-bottom:1px solid #c0c0c0"></div>
<div class="a" style="left:357.7px;top:449px;font-size:11px;letter-spacing:-0.22px;color:#000080;;white-space:pre;line-height:normal">Medicação para tratamento dos sintomas.</div>
<div class="a" style="left:191.6px;top:449px;font-size:11px;letter-spacing:-0.22px;color:#000080;;white-space:pre;line-height:normal">Conduta</div>
<div class="a" style="left:170px;top:466px;width:19px;height:20px;background:#f0f0f0;border-top:1px solid #fff;border-left:1px solid #fff;border-bottom:1px solid #000;border-right:1px solid #000;box-shadow:inset -1px 0 0 #d4d4d4,inset 0 -1px 0 #d4d4d4;"></div>
<div class="a" style="left:189px;top:466px;width:167px;height:20px;background:#f0f0f0;border-top:1px solid #fff;border-left:1px solid #fff;border-bottom:1px solid #000;border-right:1px solid #000;box-shadow:inset -1px 0 0 #d4d4d4,inset 0 -1px 0 #d4d4d4;"></div>
<div class="a" style="left:356px;top:466px;width:973px;height:20px;background:#e3eefa;border-top:1px solid #0078d7;border-bottom:1px solid #0078d7;border-left:1px solid #0078d7"></div>
<div class="a" style="left:971.6px;top:470px;font-size:11px;letter-spacing:-0.236px;color:#000;;white-space:pre;line-height:normal">Clique aqui para definir o CID desta anamnese</div>
<div class="a" style="left:191.6px;top:469px;font-size:11px;letter-spacing:-0.22px;color:#000080;;white-space:pre;line-height:normal">CID</div>
<div class="a" style="left:956px;top:461px;width:246px;height:54px;border:3px solid #fa4040;filter:drop-shadow(1px 3px 2.5px rgba(0,0,0,0.45))"></div>
<div class="a" style="left:1034px;top:516px;width:40px;height:40px;border-radius:50%;background:#fa4343;box-shadow:1px 4px 5px rgba(0,0,0,0.45)"></div>
<svg class="a" style="left:1034px;top:516px" width="40" height="40"><path d="M20,10 L23,10 L23,30.5 L20,30.5 L20,14.8 Q18,16.8 15.2,17.8 L15.2,15 Q18.5,13.3 20,10 Z" fill="#fff"/></svg>
<svg class="a" style="left:1074px;top:483px" width="14" height="20"><path d="M1.5,0.5 L1.5,16 L5,12.5 L8,19 L10.5,18 L7.5,11.5 L12.5,11.5 Z" fill="#fff" stroke="#000" stroke-width="1"/></svg>
</body></html>
